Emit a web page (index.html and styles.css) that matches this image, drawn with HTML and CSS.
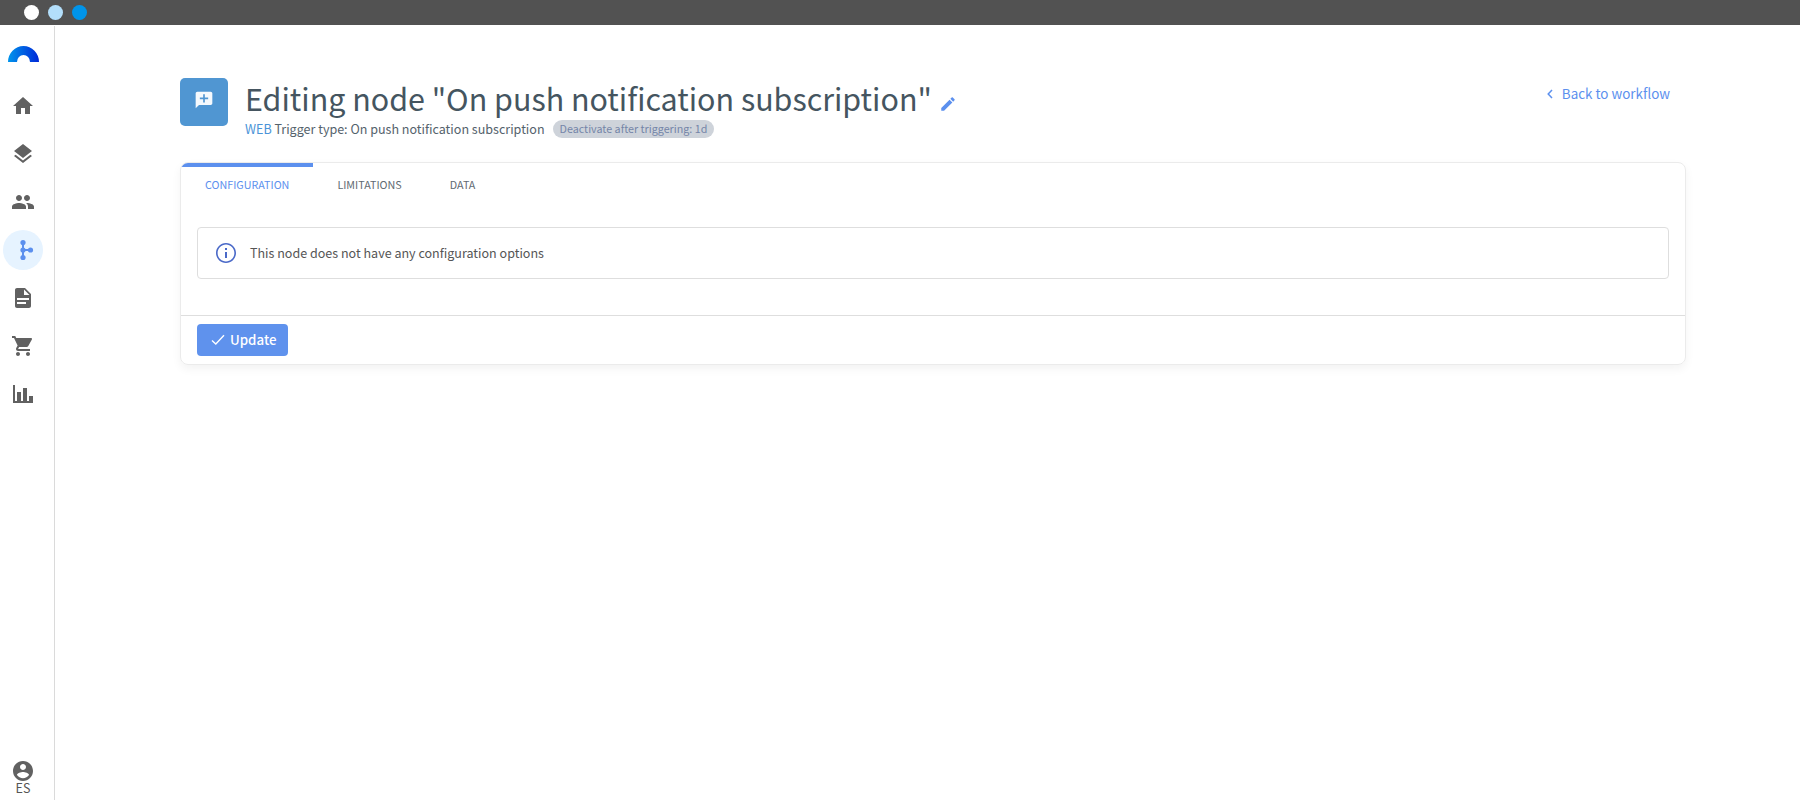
FILE: index.html
```html
<!DOCTYPE html>
<html lang="en">
<head>
    <meta charset="UTF-8">
    <meta name="viewport" content="width=device-width, initial-scale=1.0">
    <title>Editing node</title>
    <link rel="stylesheet" href="styles.css">
</head>
<body>
    <div class="topbar">
        <span class="dot white"></span>
        <span class="dot light"></span>
        <span class="dot blue"></span>
    </div>
    <div class="layout">
        <nav class="sidebar">
            <svg class="logo" width="31" height="16" viewBox="0 0 31 16">
                <defs>
                    <linearGradient id="arc" x1="0" y1="0" x2="1" y2="0">
                        <stop offset="0" stop-color="#0095ec"/>
                        <stop offset="1" stop-color="#0028d8"/>
                    </linearGradient>
                </defs>
                <path fill="url(#arc)" d="M0 16a15.5 16 0 0 1 31 0h-9a6.5 7 0 0 0-13 0z"/>
            </svg>
            <a class="nav-item" href="#"><svg viewBox="0 0 24 24"><path d="M10 20v-6h4v6h5v-8h3L12 3 2 12h3v8z"/></svg></a>
            <a class="nav-item" href="#"><svg viewBox="0 0 24 24"><path d="M11.99 18.54l-7.37-5.73L3 14.07l9 7 9-7-1.63-1.27-7.38 5.74zM12 16l7.36-5.73L21 9l-9-7-9 7 1.63 1.27L12 16z"/></svg></a>
            <a class="nav-item" href="#"><svg viewBox="0 0 24 24"><path d="M16 11c1.66 0 2.99-1.34 2.99-3S17.66 5 16 5s-3 1.34-3 3 1.34 3 3 3zm-8 0c1.66 0 2.99-1.34 2.99-3S9.66 5 8 5 5 6.34 5 8s1.34 3 3 3zm0 2c-2.33 0-7 1.17-7 3.5V19h14v-2.500c0-2.330-4.670-3.500-7-3.500zm8 0c-.29 0-.62.02-.97.05 1.160.84 1.970 1.970 1.970 3.450V19h6v-2.500c0-2.330-4.670-3.500-7-3.500z"/></svg></a>
            <a class="nav-item active" href="#">
                <svg viewBox="0 0 24 24">
                    <path d="M11 4h2v7h7v2h-7v7h-2z"/>
                    <circle cx="12" cy="4.500" r="2.600"/>
                    <circle cx="12" cy="12" r="2.600"/>
                    <circle cx="12" cy="19.500" r="2.600"/>
                    <circle cx="19.500" cy="12" r="2.600"/>
                </svg>
            </a>
            <a class="nav-item" href="#"><svg viewBox="0 0 24 24"><path d="M14 2H6c-1.100 0-1.990.9-1.990 2L4 20c0 1.100.89 2 1.990 2H18c1.100 0 2-.9 2-2V8l-6-6zm1 16H6v-2h9zm3-4H6v-2h12zm-5-5V3.500L18.500 9z"/></svg></a>
            <a class="nav-item" href="#"><svg viewBox="0 0 24 24"><path d="M7 18c-1.100 0-1.990.9-1.990 2S5.900 22 7 22s2-.9 2-2-.9-2-2-2zM1 2v2h2l3.600 7.590-1.350 2.450c-.16.28-.25.61-.25.96 0 1.100.9 2 2 2h12v-2H7.420c-.14 0-.25-.11-.25-.25l.03-.12.9-1.630h7.450c.75 0 1.410-.41 1.750-1.030l3.580-6.490c.08-.14.12-.31.12-.48 0-.55-.45-1-1-1H5.210l-.94-2H1zm16 16c-1.100 0-1.990.9-1.990 2s.89 2 1.990 2 2-.9 2-2-.9-2-2-2z"/></svg></a>
            <a class="nav-item" href="#"><svg viewBox="0 0 24 24"><path d="M2 3h2v16h18v2H2zM6 10h4v10H6zM12 6h4v14h-4zM18 14h4v6h-4z"/></svg></a>
            <div class="account">
                <svg viewBox="0 0 24 24"><path d="M12 2C6.480 2 2 6.480 2 12s4.480 10 10 10 10-4.480 10-10S17.520 2 12 2zm0 3c1.660 0 3 1.340 3 3s-1.340 3-3 3-3-1.340-3-3 1.340-3 3-3zm0 14.200c-2.500 0-4.710-1.280-6-3.220.03-1.990 4-3.080 6-3.080 1.990 0 5.970 1.090 6 3.080-1.290 1.940-3.500 3.220-6 3.220z"/></svg>
                <span>ES</span>
            </div>
        </nav>
        <main class="content">
            <div class="header">
                <div class="node-icon">
                    <svg viewBox="0 0 24 24"><path d="M20 2H4c-1.100 0-2 .9-2 2v18l4-4h14c1.100 0 2-.9 2-2V4c0-1.100-.9-2-2-2zm-3 9h-4v4h-2v-4H7V9h4V5h2v4h4z"/></svg>
                </div>
                <div class="titles">
                    <h1><span class="title-text">Editing node "On push notification subscription"</span>
                        <svg class="edit" viewBox="0 0 24 24"><path d="M3 17.250V21h3.750L17.810 9.940l-3.750-3.750L3 17.250zM20.710 7.040c.39-.39.39-1.020 0-1.410l-2.340-2.340c-.39-.39-1.020-.39-1.410 0l-1.830 1.830 3.750 3.750 1.830-1.830z"/></svg>
                    </h1>
                    <div class="subtitle">
                        <span class="trigger"><span class="web">WEB</span> Trigger type: On push notification subscription</span>
                        <span class="chip"><span>Deactivate after triggering: 1d</span></span>
                    </div>
                </div>
                <a class="back" href="#">
                    <svg viewBox="0 0 6 10"><path d="M5 1L1.200 5 5 9"/></svg>
                    <span>Back to workflow</span>
                </a>
            </div>
            <div class="card">
                <div class="tabs">
                    <a class="tab selected" href="#">CONFIGURATION</a>
                    <a class="tab" href="#">LIMITATIONS</a>
                    <a class="tab" href="#">DATA</a>
                </div>
                <div class="card-body">
                    <div class="info">
                        <svg viewBox="0 0 24 24"><path d="M11 17h2v-6h-2v6zm1-15C6.480 2 2 6.480 2 12s4.480 10 10 10 10-4.480 10-10S17.520 2 12 2zm0 18.400c-4.600 0-8.400-3.800-8.400-8.400S7.400 3.600 12 3.600s8.400 3.800 8.400 8.400-3.800 8.400-8.400 8.400zM11 9h2V7h-2v2z"/></svg>
                        <span>This node does not have any configuration options</span>
                    </div>
                </div>
                <div class="card-footer">
                    <button class="update-btn">
                        <svg viewBox="0 0 14 12"><path d="M1 6.500L4.800 10 13 1.200"/></svg>
                        <span>Update</span>
                    </button>
                </div>
            </div>
        </main>
    </div>
</body>
</html>
```

FILE: styles.css
```css
* {
    box-sizing: border-box;
}
body {
    margin: 0;
    height: 100vh;
    display: flex;
    flex-direction: column;
    background-color: #fff;
    color: #555;
    font-family: "Noto Sans CJK SC", "Noto Sans", sans-serif;
    font-size: 12.54px;
}
a {
    color: inherit;
    text-decoration: none;
}
svg {
    display: block;
    flex-shrink: 0;
}
.topbar {
    flex-shrink: 0;
    display: flex;
    align-items: center;
    gap: 9px;
    height: 25px;
    padding-left: 24px;
    background-color: #525252;
}
.dot {
    width: 15px;
    height: 15px;
    border-radius: 50%;
}
.white {
    background-color: #fff;
}
.light {
    background-color: #b3dffb;
}
.blue {
    background-color: #0094ea;
}
.layout {
    flex: 1;
    display: flex;
    padding-top: 1px;
}
.sidebar {
    display: flex;
    flex-direction: column;
    width: 55px;
    padding: 20px 0 0 3px;
    border-right: 1px solid #dadada;
}
.logo {
    margin: 0 0 24px 5px;
}
.nav-item {
    display: flex;
    align-items: center;
    justify-content: center;
    width: 40px;
    height: 40px;
    margin-bottom: 8px;
    border-radius: 50%;
}
.nav-item svg,
.account svg {
    width: 24px;
    height: 24px;
    fill: #616161;
}
.nav-item.active {
    background-color: #e6f3ff;
}
.nav-item.active svg {
    fill: #5c90ee;
}
.account {
    display: flex;
    flex-direction: column;
    align-items: center;
    width: 40px;
    margin-top: auto;
    padding-bottom: 7px;
    line-height: 10px;
}
.content {
    flex: 1;
    padding: 52px 114px 0 125px;
}
.header {
    display: flex;
    align-items: flex-start;
    height: 84px;
}
.node-icon {
    width: 48px;
    height: 48px;
    padding: 12px 0 0 14px;
    border-radius: 5px;
    background-color: #5096d2;
}
.node-icon svg {
    width: 20px;
    height: 20px;
    fill: #f5f9fd;
}
.titles {
    flex: 1;
    padding-left: 17px;
}
h1 {
    display: flex;
    align-items: center;
    gap: 7px;
    height: 42px;
    margin: 0;
    color: #455560;
    font-size: 30.43px;
    font-weight: 400;
    line-height: 42px;
}
.title-text {
    padding-bottom: 2px;
}
.edit {
    width: 18px;
    height: 18px;
    margin-top: 10px;
    fill: #5c90ee;
}
.subtitle {
    display: flex;
    align-items: center;
    gap: 8px;
    height: 18px;
    color: #54626c;
    line-height: 16px;
}
.web {
    color: #4a94d8;
}
.chip {
    height: 18px;
    padding: 0 7px;
    border-radius: 9px;
    background-color: #ced3da;
    color: #7485a8;
    font-size: 10.74px;
    line-height: 17px;
}
.back {
    display: flex;
    align-items: center;
    gap: 9px;
    height: 32px;
    margin-right: 16px;
    color: #5c90ee;
    font-size: 13.43px;
}
.back svg {
    width: 6px;
    height: 10px;
    fill: none;
    stroke: #5c90ee;
    stroke-width: 1.5;
}
.back span,
.info span,
.update-btn span {
    padding-bottom: 2px;
}
.card {
    border: 1px solid #ebebeb;
    border-radius: 8px;
    box-shadow: 0 4px 10px rgba(0, 0, 0, 0.05);
}
.tabs {
    display: flex;
    height: 48px;
}
.tab {
    padding: 0 24px;
    border-top: 4px solid transparent;
    font-size: 10.74px;
    line-height: 35px;
    color: #5f6a72;
}
.tab.selected {
    color: #5c90ee;
    background: linear-gradient(#5c90ee, #5c90ee) top / 100% 4px no-repeat border-box;
    border-top-left-radius: 7px;
}
.card-body {
    padding: 16px 16px 36px;
}
.info {
    display: flex;
    align-items: center;
    gap: 12px;
    height: 52px;
    padding-left: 16px;
    border: 1px solid #dedede;
    border-radius: 4px;
}
.info svg {
    width: 24px;
    height: 24px;
    fill: #4a69c8;
}
.card-footer {
    padding: 8px 16px;
    border-top: 1px solid #dedede;
}
.update-btn {
    display: flex;
    align-items: center;
    gap: 5px;
    width: 91px;
    height: 32px;
    padding: 0 0 0 14px;
    border: none;
    border-radius: 4px;
    background-color: #5f92ed;
    color: #fff;
    font-family: inherit;
    font-size: 13.3px;
    font-weight: 500;
    cursor: pointer;
}
.update-btn svg {
    width: 14px;
    height: 12px;
    fill: none;
    stroke: #fff;
    stroke-width: 1.4;
}
```
